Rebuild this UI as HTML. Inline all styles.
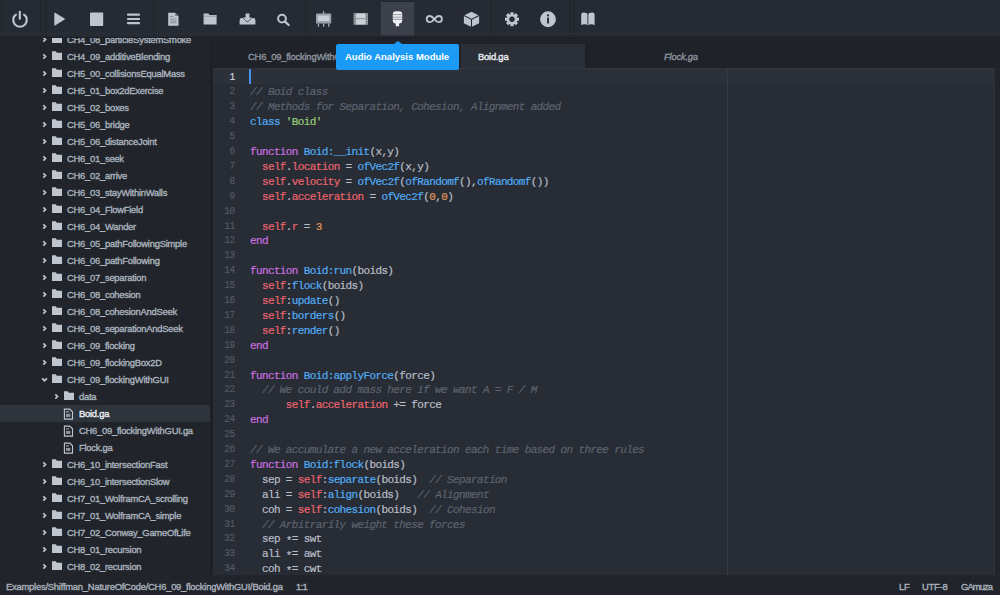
<!DOCTYPE html>
<html><head><meta charset="utf-8">
<style>
*{margin:0;padding:0;box-sizing:border-box}
html,body{width:1000px;height:595px;overflow:hidden;background:#21252b;font-family:"Liberation Sans",sans-serif}
#tb{position:absolute;left:0;top:0;width:1000px;height:38px;background:#252a33;border-bottom:1px solid #1b1e24}
#tb svg{position:absolute;left:0;top:0}
#side{position:absolute;left:0;top:38px;width:213px;height:537px;background:#21252b;overflow:hidden;border-right:3px solid #1d2026}
.row{position:absolute;left:0;width:211px;height:17px;font-size:9.4px;letter-spacing:-0.24px;line-height:17px;-webkit-text-stroke:0.35px;color:#aab3be;white-space:nowrap}
.row span{position:absolute;top:0}
.row.sel{background:#2e343c}
.row.sel span{color:#eef0f3}
#tabs{position:absolute;left:212px;top:38px;width:788px;height:30px;background:#1f2329;overflow:hidden}
.tab{position:absolute;top:6px;height:24px;font-size:9.4px;letter-spacing:-0.2px;color:#9299a3;-webkit-text-stroke:0.3px;white-space:nowrap}
.tab.act{background:#2b2f37;color:#e6e9ed;-webkit-text-stroke:0.4px}
#ed{position:absolute;left:213px;top:68px;width:782px;height:507px;background:#282c34;overflow:hidden;border-right:2px solid #2b3038}
#curl{position:absolute;left:0;top:0;width:782px;height:16px;background:#2b3039;border-top:1px solid #30353e}
#cursor{position:absolute;left:35.8px;top:0.5px;width:2.2px;height:15.3px;background:#4592e8}
#wrap{position:absolute;left:513.5px;top:0;width:1px;height:507px;background:#353a44}
#code{position:absolute;left:0;top:2.5px;font-family:"Liberation Mono",monospace;font-size:11px;letter-spacing:-0.63px;-webkit-text-stroke:0.2px;line-height:14.9px;color:#b8bec8;white-space:pre}
.ln{position:absolute;left:0;width:22px;margin-top:-1px;text-align:right;color:#535a69;font-size:11px;letter-spacing:-0.3px;transform:scaleX(0.86);transform-origin:100% 50%}
.ln.act{color:#d7dae0}
.cl{position:absolute;left:37px}
.c{color:#5c6370;font-style:italic}
.ast{position:relative;top:2px}
.k{color:#cc70e0}
.f{color:#52acf5}
.s{color:#98cc79}
.r{color:#ec6570}
.n{color:#e09a5f}
#status{position:absolute;left:0;top:575px;width:1000px;height:20px;background:#21252b;font-size:9.4px;letter-spacing:-0.22px;line-height:24px;-webkit-text-stroke:0.35px;color:#aab2be;white-space:nowrap}
#status span{position:absolute;top:0}
#tip{position:absolute;left:336px;top:44px;width:123px;height:26px;background:#1b9bf5;border-radius:2px;color:#fff;font-size:9.5px;font-weight:bold;line-height:26px;white-space:nowrap}
#tip span{position:absolute;left:9px;top:0}
#tip:before{content:"";position:absolute;left:58px;top:-3.5px;border-left:4px solid transparent;border-right:4px solid transparent;border-bottom:3.5px solid #1b9bf5}
</style></head><body>
<div id="tb"><svg width="1000" height="38"><rect x="1" y="0" width="1" height="36" fill="#20242b"/><rect x="40.5" y="0" width="1" height="36" fill="#20242b"/><rect x="45.5" y="0" width="1" height="36" fill="#20242b"/><rect x="153" y="0" width="1" height="36" fill="#20242b"/><rect x="305" y="0" width="1" height="36" fill="#20242b"/><rect x="490.5" y="0" width="1" height="36" fill="#20242b"/><rect x="569" y="0" width="1" height="36" fill="#20242b"/><rect x="573.5" y="0" width="1" height="36" fill="#20242b"/><rect x="0" y="33" width="1000" height="1" fill="#2a2f38"/><rect x="379.5" y="1.5" width="35.5" height="34.5" fill="#1f232a"/><rect x="380.5" y="2" width="34" height="33.5" fill="#3b404b"/><path d="M16.6 14.1A6.8 6.8 0 1 0 23.4 14.1" fill="none" stroke="#bfc5ce" stroke-width="2.1"/><path d="M19.8 11.8V18.8" stroke="#bfc5ce" stroke-width="2.2" stroke-linecap="round"/><path d="M54.3 13.2Q54.3 12.3 55.1 12.8L64.6 18.6Q65.3 19.1 64.6 19.6L55.1 25.4Q54.3 25.9 54.3 25z" fill="#bfc5ce"/><rect x="90" y="12.6" width="13.2" height="13.3" rx="0.6" fill="#bfc5ce"/><path d="M128 14.7h11M128 19h11M128 23.2h11" stroke="#bfc5ce" stroke-width="2.2" stroke-linecap="round"/><path d="M168.2 12.8h7l3.3 3.3v9.7h-10.3z" fill="#bfc5ce"/><path d="M175.2 12.8v3.3h3.3z" fill="#6d737d"/><path d="M170 16.4h3.5M170 19h6.6M170 21h6.6M170 22.8h6.6" stroke="#6a707a" stroke-width="0.7"/><path d="M203.6 13.6h4.8l1.2 1.4h7v9.5h-13z" fill="#bfc5ce"/><path d="M203.6 16.2h13" stroke="#7a808a" stroke-width="0.6"/><path d="M239.6 20.2Q239.6 18 241.8 18h2.6l3.1 3.2l3.1-3.2h2.6Q255.4 18 255.4 20.2v4.3h-15.8z" fill="#bfc5ce"/><path d="M245.6 13.4h3.8v4h2.6l-4.5 4.4l-4.5-4.4h2.6z" fill="#bfc5ce" stroke="#252a33" stroke-width="1.1" paint-order="stroke"/><circle cx="282" cy="18.6" r="3.9" fill="none" stroke="#bfc5ce" stroke-width="2"/><path d="M285 21.6l3.7 3.4" stroke="#bfc5ce" stroke-width="2.3" stroke-linecap="round"/><rect x="316" y="13.5" width="15.2" height="10" rx="0.5" fill="#9ba1aa"/><rect x="317.9" y="15.6" width="11.4" height="5.4" fill="#c9ced6"/><path d="M323.6 11.2v2.5M323.6 23.5v3.3M318.6 23.5l-0.3 3.3M328.6 23.5l0.3 3.3" stroke="#a9afb8" stroke-width="1.3"/><rect x="353.6" y="13.1" width="14.3" height="11.7" fill="#a3a9b2"/><rect x="356.2" y="13.6" width="9.1" height="10.7" fill="#cdd2d9"/><path d="M356.2 18.7h9.1" stroke="#80868f" stroke-width="0.9"/><path d="M354.9 14v10.5M366.6 14v10.5" stroke="#4a505a" stroke-width="0.9" stroke-dasharray="1.2 1.2"/><path d="M392.8 14.2Q392.8 11.2 395.8 11.2h3.4Q402.2 11.2 402.2 14.2v6.8Q402.2 23.2 399.6 23.4h-4.4Q392.8 23.2 392.8 21z" fill="#eef0f3"/><rect x="395.7" y="22.8" width="3.4" height="3.5" rx="0.6" fill="#eef0f3"/><path d="M392.8 14.6h9.4M392.8 17.2h9.4M392.8 19.4h9.4" stroke="#8d929b" stroke-width="0.9"/><path d="M434.3 19.1c-1.8-2.3-3.2-3.1-4.5-3.1a3.1 3.1 0 0 0 0 6.2c1.3 0 2.7-.8 4.5-3.1c1.8 2.3 3.2 3.1 4.5 3.1a3.1 3.1 0 0 0 0-6.2c-1.3 0-2.7.8-4.5 3.1z" fill="none" stroke="#bfc5ce" stroke-width="1.8"/><path d="M471.5 11.7l7.6 3.9v7.6l-7.6 3.9l-7.6-3.9v-7.6z" fill="#bfc5ce"/><path d="M464 15.6l7.5 3.8l7.5-3.8M471.5 19.4v7.8" fill="none" stroke="#262a33" stroke-width="1.1"/><circle cx="512" cy="19.2" r="5.3" fill="#bfc5ce"/><rect x="510.4" y="12.2" width="3.2" height="3" transform="rotate(0 512 19.2)" fill="#bfc5ce"/><rect x="510.4" y="12.2" width="3.2" height="3" transform="rotate(45 512 19.2)" fill="#bfc5ce"/><rect x="510.4" y="12.2" width="3.2" height="3" transform="rotate(90 512 19.2)" fill="#bfc5ce"/><rect x="510.4" y="12.2" width="3.2" height="3" transform="rotate(135 512 19.2)" fill="#bfc5ce"/><rect x="510.4" y="12.2" width="3.2" height="3" transform="rotate(180 512 19.2)" fill="#bfc5ce"/><rect x="510.4" y="12.2" width="3.2" height="3" transform="rotate(225 512 19.2)" fill="#bfc5ce"/><rect x="510.4" y="12.2" width="3.2" height="3" transform="rotate(270 512 19.2)" fill="#bfc5ce"/><rect x="510.4" y="12.2" width="3.2" height="3" transform="rotate(315 512 19.2)" fill="#bfc5ce"/><circle cx="512" cy="19.2" r="2.7" fill="#252a33"/><circle cx="548" cy="19.25" r="7.9" fill="#bfc5ce"/><circle cx="548" cy="15.4" r="1.15" fill="#252a33"/><rect x="547.1" y="17.6" width="1.9" height="5.8" fill="#252a33"/><path d="M581.2 14.4Q581.2 12.4 583.5 12.4Q587.2 12.4 587.4 14.2V25.2Q586 24 584.3 24.2Q582.5 24.3 581.2 25.2z" fill="#bfc5ce"/><path d="M594.6 14.4Q594.6 12.4 592.3 12.4Q588.6 12.4 588.3 14.2V25.2Q589.7 24 591.4 24.2Q593.2 24.3 594.6 25.2z" fill="#bfc5ce"/></svg></div>
<div id="side"><div class="row" style="top:-7.0px"><span style="left:67px">CH4_08_particleSystemSmoke</span></div><div class="row" style="top:10.0px"><span style="left:67px">CH4_09_additiveBlending</span></div><div class="row" style="top:27.0px"><span style="left:67px">CH5_00_collisionsEqualMass</span></div><div class="row" style="top:44.0px"><span style="left:67px">CH5_01_box2dExercise</span></div><div class="row" style="top:61.0px"><span style="left:67px">CH5_02_boxes</span></div><div class="row" style="top:78.0px"><span style="left:67px">CH5_06_bridge</span></div><div class="row" style="top:95.0px"><span style="left:67px">CH5_06_distanceJoint</span></div><div class="row" style="top:112.0px"><span style="left:67px">CH6_01_seek</span></div><div class="row" style="top:129.0px"><span style="left:67px">CH6_02_arrive</span></div><div class="row" style="top:146.0px"><span style="left:67px">CH6_03_stayWithinWalls</span></div><div class="row" style="top:163.0px"><span style="left:67px">CH6_04_FlowField</span></div><div class="row" style="top:180.0px"><span style="left:67px">CH6_04_Wander</span></div><div class="row" style="top:197.0px"><span style="left:67px">CH6_05_pathFollowingSimple</span></div><div class="row" style="top:214.0px"><span style="left:67px">CH6_06_pathFollowing</span></div><div class="row" style="top:231.0px"><span style="left:67px">CH6_07_separation</span></div><div class="row" style="top:248.0px"><span style="left:67px">CH6_08_cohesion</span></div><div class="row" style="top:265.0px"><span style="left:67px">CH6_08_cohesionAndSeek</span></div><div class="row" style="top:282.0px"><span style="left:67px">CH6_08_separationAndSeek</span></div><div class="row" style="top:299.0px"><span style="left:67px">CH6_09_flocking</span></div><div class="row" style="top:316.0px"><span style="left:67px">CH6_09_flockingBox2D</span></div><div class="row" style="top:333.0px"><span style="left:67px">CH6_09_flockingWithGUI</span></div><div class="row" style="top:350.0px"><span style="left:79px">data</span></div><div class="row sel" style="top:367.0px"><span style="left:79px">Boid.ga</span></div><div class="row" style="top:384.0px"><span style="left:79px">CH6_09_flockingWithGUI.ga</span></div><div class="row" style="top:401.0px"><span style="left:79px">Flock.ga</span></div><div class="row" style="top:418.0px"><span style="left:67px">CH6_10_intersectionFast</span></div><div class="row" style="top:435.0px"><span style="left:67px">CH6_10_intersectionSlow</span></div><div class="row" style="top:452.0px"><span style="left:67px">CH7_01_WolframCA_scrolling</span></div><div class="row" style="top:469.0px"><span style="left:67px">CH7_01_WolframCA_simple</span></div><div class="row" style="top:486.0px"><span style="left:67px">CH7_02_Conway_GameOfLife</span></div><div class="row" style="top:503.0px"><span style="left:67px">CH8_01_recursion</span></div><div class="row" style="top:520.0px"><span style="left:67px">CH8_02_recursion</span></div><svg width="212" height="537" style="position:absolute;left:0;top:0"><path d="M43.3 -0.6000000000000001L45.5 1.5L43.3 3.6" fill="none" stroke="#bfc5ce" stroke-width="1.7"/><path d="M52 -3.7h3.8l1.1 1.4h5.1v7.4h-10z" fill="#bfc5ce"/><path d="M43.3 16.4L45.5 18.5L43.3 20.6" fill="none" stroke="#bfc5ce" stroke-width="1.7"/><path d="M52 13.3h3.8l1.1 1.4h5.1v7.4h-10z" fill="#bfc5ce"/><path d="M43.3 33.4L45.5 35.5L43.3 37.6" fill="none" stroke="#bfc5ce" stroke-width="1.7"/><path d="M52 30.3h3.8l1.1 1.4h5.1v7.4h-10z" fill="#bfc5ce"/><path d="M43.3 50.4L45.5 52.5L43.3 54.6" fill="none" stroke="#bfc5ce" stroke-width="1.7"/><path d="M52 47.3h3.8l1.1 1.4h5.1v7.4h-10z" fill="#bfc5ce"/><path d="M43.3 67.4L45.5 69.5L43.3 71.6" fill="none" stroke="#bfc5ce" stroke-width="1.7"/><path d="M52 64.3h3.8l1.1 1.4h5.1v7.4h-10z" fill="#bfc5ce"/><path d="M43.3 84.4L45.5 86.5L43.3 88.6" fill="none" stroke="#bfc5ce" stroke-width="1.7"/><path d="M52 81.3h3.8l1.1 1.4h5.1v7.4h-10z" fill="#bfc5ce"/><path d="M43.3 101.4L45.5 103.5L43.3 105.6" fill="none" stroke="#bfc5ce" stroke-width="1.7"/><path d="M52 98.3h3.8l1.1 1.4h5.1v7.4h-10z" fill="#bfc5ce"/><path d="M43.3 118.4L45.5 120.5L43.3 122.6" fill="none" stroke="#bfc5ce" stroke-width="1.7"/><path d="M52 115.3h3.8l1.1 1.4h5.1v7.4h-10z" fill="#bfc5ce"/><path d="M43.3 135.4L45.5 137.5L43.3 139.6" fill="none" stroke="#bfc5ce" stroke-width="1.7"/><path d="M52 132.3h3.8l1.1 1.4h5.1v7.4h-10z" fill="#bfc5ce"/><path d="M43.3 152.4L45.5 154.5L43.3 156.6" fill="none" stroke="#bfc5ce" stroke-width="1.7"/><path d="M52 149.3h3.8l1.1 1.4h5.1v7.4h-10z" fill="#bfc5ce"/><path d="M43.3 169.4L45.5 171.5L43.3 173.6" fill="none" stroke="#bfc5ce" stroke-width="1.7"/><path d="M52 166.3h3.8l1.1 1.4h5.1v7.4h-10z" fill="#bfc5ce"/><path d="M43.3 186.4L45.5 188.5L43.3 190.6" fill="none" stroke="#bfc5ce" stroke-width="1.7"/><path d="M52 183.3h3.8l1.1 1.4h5.1v7.4h-10z" fill="#bfc5ce"/><path d="M43.3 203.4L45.5 205.5L43.3 207.6" fill="none" stroke="#bfc5ce" stroke-width="1.7"/><path d="M52 200.3h3.8l1.1 1.4h5.1v7.4h-10z" fill="#bfc5ce"/><path d="M43.3 220.4L45.5 222.5L43.3 224.6" fill="none" stroke="#bfc5ce" stroke-width="1.7"/><path d="M52 217.3h3.8l1.1 1.4h5.1v7.4h-10z" fill="#bfc5ce"/><path d="M43.3 237.4L45.5 239.5L43.3 241.6" fill="none" stroke="#bfc5ce" stroke-width="1.7"/><path d="M52 234.3h3.8l1.1 1.4h5.1v7.4h-10z" fill="#bfc5ce"/><path d="M43.3 254.4L45.5 256.5L43.3 258.6" fill="none" stroke="#bfc5ce" stroke-width="1.7"/><path d="M52 251.3h3.8l1.1 1.4h5.1v7.4h-10z" fill="#bfc5ce"/><path d="M43.3 271.4L45.5 273.5L43.3 275.6" fill="none" stroke="#bfc5ce" stroke-width="1.7"/><path d="M52 268.3h3.8l1.1 1.4h5.1v7.4h-10z" fill="#bfc5ce"/><path d="M43.3 288.4L45.5 290.5L43.3 292.6" fill="none" stroke="#bfc5ce" stroke-width="1.7"/><path d="M52 285.3h3.8l1.1 1.4h5.1v7.4h-10z" fill="#bfc5ce"/><path d="M43.3 305.4L45.5 307.5L43.3 309.6" fill="none" stroke="#bfc5ce" stroke-width="1.7"/><path d="M52 302.3h3.8l1.1 1.4h5.1v7.4h-10z" fill="#bfc5ce"/><path d="M43.3 322.4L45.5 324.5L43.3 326.6" fill="none" stroke="#bfc5ce" stroke-width="1.7"/><path d="M52 319.3h3.8l1.1 1.4h5.1v7.4h-10z" fill="#bfc5ce"/><path d="M42.1 340.3L44.5 342.7L46.9 340.3" fill="none" stroke="#bfc5ce" stroke-width="1.7"/><path d="M52 336.3h3.8l1.1 1.4h5.1v7.4h-10z" fill="#bfc5ce"/><path d="M55.3 356.4L57.5 358.5L55.3 360.6" fill="none" stroke="#bfc5ce" stroke-width="1.7"/><path d="M64 353.3h3.8l1.1 1.4h5.1v7.4h-10z" fill="#bfc5ce"/><path d="M64.39999999999999 371.1h5.4l2.7 2.7v7.3h-8.1z" fill="none" stroke="#bfc5ce" stroke-width="1.1"/><path d="M66.0 373.9h3.2" stroke="#bfc5ce" stroke-width="0.9"/><rect x="66.0" y="375.9" width="4.3" height="3" fill="#8f959e"/><path d="M64.39999999999999 388.1h5.4l2.7 2.7v7.3h-8.1z" fill="none" stroke="#bfc5ce" stroke-width="1.1"/><path d="M66.0 390.9h3.2" stroke="#bfc5ce" stroke-width="0.9"/><rect x="66.0" y="392.9" width="4.3" height="3" fill="#8f959e"/><path d="M64.39999999999999 405.1h5.4l2.7 2.7v7.3h-8.1z" fill="none" stroke="#bfc5ce" stroke-width="1.1"/><path d="M66.0 407.9h3.2" stroke="#bfc5ce" stroke-width="0.9"/><rect x="66.0" y="409.9" width="4.3" height="3" fill="#8f959e"/><path d="M43.3 424.4L45.5 426.5L43.3 428.6" fill="none" stroke="#bfc5ce" stroke-width="1.7"/><path d="M52 421.3h3.8l1.1 1.4h5.1v7.4h-10z" fill="#bfc5ce"/><path d="M43.3 441.4L45.5 443.5L43.3 445.6" fill="none" stroke="#bfc5ce" stroke-width="1.7"/><path d="M52 438.3h3.8l1.1 1.4h5.1v7.4h-10z" fill="#bfc5ce"/><path d="M43.3 458.4L45.5 460.5L43.3 462.6" fill="none" stroke="#bfc5ce" stroke-width="1.7"/><path d="M52 455.3h3.8l1.1 1.4h5.1v7.4h-10z" fill="#bfc5ce"/><path d="M43.3 475.4L45.5 477.5L43.3 479.6" fill="none" stroke="#bfc5ce" stroke-width="1.7"/><path d="M52 472.3h3.8l1.1 1.4h5.1v7.4h-10z" fill="#bfc5ce"/><path d="M43.3 492.4L45.5 494.5L43.3 496.6" fill="none" stroke="#bfc5ce" stroke-width="1.7"/><path d="M52 489.3h3.8l1.1 1.4h5.1v7.4h-10z" fill="#bfc5ce"/><path d="M43.3 509.4L45.5 511.5L43.3 513.6" fill="none" stroke="#bfc5ce" stroke-width="1.7"/><path d="M52 506.3h3.8l1.1 1.4h5.1v7.4h-10z" fill="#bfc5ce"/><path d="M43.3 526.4L45.5 528.5L43.3 530.6" fill="none" stroke="#bfc5ce" stroke-width="1.7"/><path d="M52 523.3h3.8l1.1 1.4h5.1v7.4h-10z" fill="#bfc5ce"/></svg></div>
<div id="tabs"><div class="tab" style="left:0;width:124px"><span style="position:absolute;left:36px;top:7px">CH6_09_flockingWithGUI.ga</span></div><div class="tab act" style="left:249px;width:124px"><span style="position:absolute;left:17px;top:7px">Boid.ga</span></div><div class="tab" style="left:373px;width:124px;border-left:1px solid #1a1d22"><span style="position:absolute;left:78px;top:7px;font-style:italic;letter-spacing:-0.2px">Flock.ga</span></div></div>
<div id="ed"><div id="curl"></div><div id="wrap"></div><div id="cursor"></div><div id="code"><div class="ln act" style="top:0.00px">1</div><div class="cl" style="top:0.00px"></div><div class="ln" style="top:14.90px">2</div><div class="cl" style="top:14.90px"><span class="c">// Boid class</span></div><div class="ln" style="top:29.80px">3</div><div class="cl" style="top:29.80px"><span class="c">// Methods for Separation, Cohesion, Alignment added</span></div><div class="ln" style="top:44.70px">4</div><div class="cl" style="top:44.70px"><span class="f">class</span> <span class="s">'Boid'</span></div><div class="ln" style="top:59.60px">5</div><div class="cl" style="top:59.60px"></div><div class="ln" style="top:74.50px">6</div><div class="cl" style="top:74.50px"><span class="k">function</span> <span class="f">Boid:__init</span>(x,y)</div><div class="ln" style="top:89.40px">7</div><div class="cl" style="top:89.40px">  <span class="r">self</span>.<span class="r">location</span> = <span class="f">ofVec2f</span>(x,y)</div><div class="ln" style="top:104.30px">8</div><div class="cl" style="top:104.30px">  <span class="r">self</span>.<span class="r">velocity</span> = <span class="f">ofVec2f</span>(<span class="f">ofRandomf</span>(),<span class="f">ofRandomf</span>())</div><div class="ln" style="top:119.20px">9</div><div class="cl" style="top:119.20px">  <span class="r">self</span>.<span class="r">acceleration</span> = <span class="f">ofVec2f</span>(<span class="n">0</span>,<span class="n">0</span>)</div><div class="ln" style="top:134.10px">10</div><div class="cl" style="top:134.10px"></div><div class="ln" style="top:149.00px">11</div><div class="cl" style="top:149.00px">  <span class="r">self</span>.<span class="r">r</span> = <span class="n">3</span></div><div class="ln" style="top:163.90px">12</div><div class="cl" style="top:163.90px"><span class="k">end</span></div><div class="ln" style="top:178.80px">13</div><div class="cl" style="top:178.80px"></div><div class="ln" style="top:193.70px">14</div><div class="cl" style="top:193.70px"><span class="k">function</span> <span class="f">Boid:run</span>(boids)</div><div class="ln" style="top:208.60px">15</div><div class="cl" style="top:208.60px">  <span class="r">self</span>:<span class="f">flock</span>(boids)</div><div class="ln" style="top:223.50px">16</div><div class="cl" style="top:223.50px">  <span class="r">self</span>:<span class="f">update</span>()</div><div class="ln" style="top:238.40px">17</div><div class="cl" style="top:238.40px">  <span class="r">self</span>:<span class="f">borders</span>()</div><div class="ln" style="top:253.30px">18</div><div class="cl" style="top:253.30px">  <span class="r">self</span>:<span class="f">render</span>()</div><div class="ln" style="top:268.20px">19</div><div class="cl" style="top:268.20px"><span class="k">end</span></div><div class="ln" style="top:283.10px">20</div><div class="cl" style="top:283.10px"></div><div class="ln" style="top:298.00px">21</div><div class="cl" style="top:298.00px"><span class="k">function</span> <span class="f">Boid:applyForce</span>(force)</div><div class="ln" style="top:312.90px">22</div><div class="cl" style="top:312.90px">  <span class="c">// We could add mass here if we want A = F / M</span></div><div class="ln" style="top:327.80px">23</div><div class="cl" style="top:327.80px">      <span class="r">self</span>.<span class="r">acceleration</span> += force</div><div class="ln" style="top:342.70px">24</div><div class="cl" style="top:342.70px"><span class="k">end</span></div><div class="ln" style="top:357.60px">25</div><div class="cl" style="top:357.60px"></div><div class="ln" style="top:372.50px">26</div><div class="cl" style="top:372.50px"><span class="c">// We accumulate a new acceleration each time based on three rules</span></div><div class="ln" style="top:387.40px">27</div><div class="cl" style="top:387.40px"><span class="k">function</span> <span class="f">Boid:flock</span>(boids)</div><div class="ln" style="top:402.30px">28</div><div class="cl" style="top:402.30px">  sep = <span class="r">self</span>:<span class="f">separate</span>(boids)  <span class="c">// Separation</span></div><div class="ln" style="top:417.20px">29</div><div class="cl" style="top:417.20px">  ali = <span class="r">self</span>:<span class="f">align</span>(boids)   <span class="c">// Alignment</span></div><div class="ln" style="top:432.10px">30</div><div class="cl" style="top:432.10px">  coh = <span class="r">self</span>:<span class="f">cohesion</span>(boids)  <span class="c">// Cohesion</span></div><div class="ln" style="top:447.00px">31</div><div class="cl" style="top:447.00px">  <span class="c">// Arbitrarily weight these forces</span></div><div class="ln" style="top:461.90px">32</div><div class="cl" style="top:461.90px">  sep <span class="ast">*</span>= swt</div><div class="ln" style="top:476.80px">33</div><div class="cl" style="top:476.80px">  ali <span class="ast">*</span>= awt</div><div class="ln" style="top:491.70px">34</div><div class="cl" style="top:491.70px">  coh <span class="ast">*</span>= cwt</div><div class="ln" style="top:506.60px">35</div><div class="cl" style="top:506.60px">  <span class="f">self</span>:<span class="f">applyForce</span>(sep)</div></div></div>
<div id="status"><span style="left:6px">Examples/Shiffman_NatureOfCode/CH6_09_flockingWithGUI/Boid.ga</span><span style="left:296px;letter-spacing:-0.6px">1:1</span><span style="left:899px">LF</span><span style="left:922px">UTF-8</span><span style="left:961px;letter-spacing:-0.9px">GAmuza</span></div>
<div id="tip"><span>Audio Analysis Module</span></div>
</body></html>
